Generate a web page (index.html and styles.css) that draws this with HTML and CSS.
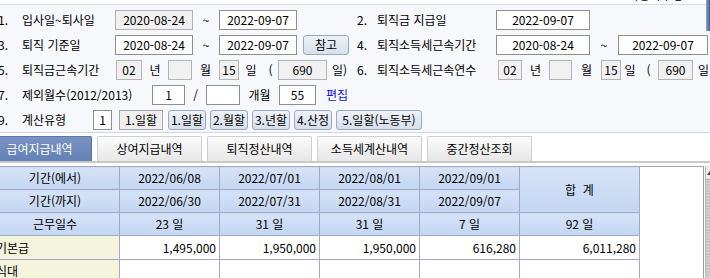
FILE: index.html
```html
<!DOCTYPE html>
<html lang="ko">
<head>
<meta charset="utf-8">
<title>퇴직정산</title>
<link rel="stylesheet" href="styles.css">
</head>
<body>
<div class="topline"><span class="cut">사용자수정</span></div>
<div class="edgebar"></div>
<div class="panel">
  <div class="row">
    <div class="half">
      <span class="num">1.</span><span class="lbl">입사일~퇴사일</span>
      <span class="box g w78">2020-08-24</span><span class="sep w26">~</span><span class="box w78">2022-09-07</span>
    </div>
    <div class="half r">
      <span class="num">2.</span><span class="lbl">퇴직금 지급일</span>
      <span class="box w94">2022-09-07</span>
    </div>
  </div>
  <div class="row">
    <div class="half">
      <span class="num">3.</span><span class="lbl">퇴직 기준일</span>
      <span class="box w78">2020-08-24</span><span class="sep w26">~</span><span class="box w78">2022-09-07</span>
      <span class="rbtn ref">참고</span>
    </div>
    <div class="half r">
      <span class="num">4.</span><span class="lbl">퇴직소득세근속기간</span>
      <span class="box w94">2020-08-24</span><span class="sep w28">~</span><span class="box w90">2022-09-07</span>
    </div>
  </div>
  <div class="row">
    <div class="half">
      <span class="num">5.</span><span class="lbl">퇴직금근속기간</span>
      <span class="box g w26 ml1">02</span><span class="sep w26">년</span>
      <span class="box g w24"></span><span class="sep w27">월</span>
      <span class="box g w20">15</span><span class="sep w24">일</span><span class="sep w15">(</span>
      <span class="box g w49">690</span><span class="tail">일)</span>
    </div>
    <div class="half r">
      <span class="num">6.</span><span class="lbl">퇴직소득세근속연수</span>
      <span class="box g w24 ml2">02</span><span class="sep w27">년</span>
      <span class="box g w23"></span><span class="sep w29">월</span>
      <span class="box g w20">15</span><span class="sep w18">일</span><span class="sep w19">(</span>
      <span class="box g w35">690</span><span class="tail">일</span>
    </div>
  </div>
  <div class="row">
    <span class="num">7.</span><span class="lbl w130">제외월수(2012/2013)</span>
    <span class="box w33">1</span><span class="sep w21">/</span><span class="box w34"></span>
    <span class="sep w39">개월</span><span class="box w37">55</span>
    <span class="link">편집</span>
  </div>
  <div class="row">
    <span class="num">9.</span><span class="lbl w71">계산유형</span>
    <span class="box w19">1</span>
    <span class="fbtn">1.일할</span>
    <span class="rbtn opt">1.일할</span>
    <span class="rbtn opt">2.월할</span>
    <span class="rbtn opt">3.년할</span>
    <span class="rbtn opt">4.산정</span>
    <span class="rbtn opt wide">5.일할(노동부)</span>
  </div>
</div>

<div class="tabs">
  <div class="tab on">급여지급내역</div>
  <div class="tab">상여지급내역</div>
  <div class="tab">퇴직정산내역</div>
  <div class="tab">소득세계산내역</div>
  <div class="tab">중간정산조회</div>
</div>

<div class="grid">
  <div class="gridbox">
    <table class="sheet">
      <colgroup>
        <col class="c0"><col class="cd"><col class="cd"><col class="cd"><col class="cd"><col class="ct">
      </colgroup>
      <tr class="hd">
        <td>기간(에서)</td><td>2022/06/08</td><td>2022/07/01</td><td>2022/08/01</td><td>2022/09/01</td>
        <td rowspan="2">합&nbsp;&nbsp;계</td>
      </tr>
      <tr class="hd">
        <td>기간(까지)</td><td>2022/06/30</td><td>2022/07/31</td><td>2022/08/31</td><td>2022/09/07</td>
      </tr>
      <tr class="hd">
        <td>근무일수</td><td>23 일</td><td>31 일</td><td>31 일</td><td>7 일</td><td>92 일</td>
      </tr>
      <tr class="dt">
        <td class="nm">기본급</td><td>1,495,000</td><td>1,950,000</td><td>1,950,000</td><td>616,280</td><td>6,011,280</td>
      </tr>
      <tr class="dt">
        <td class="nm">식대</td><td></td><td></td><td></td><td></td><td></td>
      </tr>
      <tr class="dt">
        <td class="nm">연장수당</td><td></td><td></td><td></td><td></td><td></td>
      </tr>
    </table>
    <div class="filler"></div>
  </div>
  <div class="vscroll"><div class="sbtn"><span class="arrow"></span></div></div>
</div>
</body>
</html>
```
FILE: styles.css
```css
* { box-sizing: border-box; }
html, body { margin: 0; padding: 0; }
body {
  width: 710px;
  height: 278px;
  overflow: hidden;
  background: #fff;
  color: #000;
  font-family: "Noto Sans CJK KR", "Liberation Sans", sans-serif;
  font-size: 12px;
  position: relative;
}

.topline { height: 4px; overflow: hidden; display: flex; }
.topline .cut { margin-left: 628px; margin-top: -13px; line-height: 16px; white-space: nowrap; }
.edgebar {
  position: absolute; right: 0; top: 0; width: 4px; height: 31px;
  background: linear-gradient(90deg, #8aa5cf, #3d5d92);
}

.panel {
  background: #f6f8fc;
  border-top: 1px solid #d3dcec;
  border-bottom: 1px solid #cbd6e8;
  padding-top: 2px;
}
.row { display: flex; align-items: center; height: 25px; white-space: nowrap; line-height: 18px; }
.half { display: flex; align-items: center; flex: 0 0 357px; }
.half.r { flex: 1 1 auto; }
.num { flex: 0 0 24px; margin-left: -2px; }
.half.r .num { flex-basis: 20px; margin-left: 0; }
.lbl { flex: 0 0 93px; }
.half.r .lbl { flex-basis: 119px; }
.lbl.w130 { flex-basis: 130px; }
.lbl.w71 { flex-basis: 71px; }

.box {
  flex: none;
  height: 20px;
  line-height: 18px;
  border: 1px solid #8f8f8f;
  background: #fff;
  text-align: center;
}
.box.g { background: #f1f1f1; border-color: #b3b3b3; }
.sep { flex: none; text-align: center; }
.tail { margin-left: 5px; }
.ml1 { margin-left: 1px; }
.ml2 { margin-left: 2px; }

.w15 { width: 15px; } .w18 { width: 18px; } .w19 { width: 19px; } .w20 { width: 20px; }
.w21 { width: 21px; } .w23 { width: 23px; } .w24 { width: 24px; } .w26 { width: 26px; }
.w27 { width: 27px; } .w28 { width: 28px; } .w29 { width: 29px; } .w33 { width: 33px; }
.w34 { width: 34px; } .w35 { width: 35px; } .w37 { width: 37px; } .w39 { width: 39px; }
.w49 { width: 49px; } .w78 { width: 78px; } .w90 { width: 90px; } .w94 { width: 94px; }

.link { margin-left: 10px; color: #1010e0; }

.rbtn {
  flex: none;
  height: 20px;
  line-height: 18px;
  text-align: center;
  border: 1px solid #9aa9c0;
  border-radius: 3px;
  background: linear-gradient(#eef2f8, #d6dfeb);
}
.rbtn.ref { width: 46px; margin-left: 6px; }
.rbtn.opt { width: 38px; margin-left: 4px; }
.fbtn + .rbtn.opt { margin-left: 5px; }
.rbtn.wide { width: 86px; }
.fbtn {
  flex: none;
  width: 44px;
  height: 20px;
  line-height: 18px;
  margin-left: 7px;
  text-align: center;
  border: 1px solid #a5a5a5;
  background: #efefef;
}

.tabs {
  display: flex;
  gap: 5px;
  margin: 3px 0 0 -13px;
  border-bottom: 2px solid #c9c9c9;
  height: 27px;
}
.tab {
  flex: none;
  width: 105px;
  height: 25px;
  line-height: 23px;
  text-align: center;
  border: 1px solid #cfcfcf;
  border-bottom: none;
  border-radius: 2px 2px 0 0;
  background: linear-gradient(#fbfbfb, #e7e7e7);
}
.tab.on {
  background: linear-gradient(#7893c2, #6281b5);
  border-color: #5a77aa;
  color: #fff;
}

.grid { display: flex; margin-top: 3px; }
.gridbox { display: flex; margin-left: -10px; width: 714px; flex: none; }
.sheet {
  border-collapse: collapse;
  table-layout: fixed;
  width: 649px;
  flex: none;
}
.sheet col.c0 { width: 129px; }
.sheet col.cd { width: 100px; }
.sheet col.ct { width: 120px; }
.sheet td {
  height: 22px;
  padding: 0;
  border: 1px solid #a1aac4;
  line-height: 20px;
  white-space: nowrap;
  overflow: hidden;
}
.sheet tr.hd td {
  background: linear-gradient(#d6e3f7, #c3d6f1);
  text-align: center;
}
.sheet tr.dt td { background: #fff; text-align: right; padding-right: 3px; }
.sheet tr.dt td.nm { background: #f4f4dd; text-align: left; padding-left: 5px; padding-right: 0; }
.filler {
  flex: 1 1 auto;
  height: 140px;
  background: #fff;
  border-top: 1px solid #a1aac4;
  border-right: 1px solid #9a9a9a;
}
.vscroll {
  flex: none;
  width: 14px;
  margin-left: 1px;
  height: 140px;
  background: repeating-linear-gradient(#c6c6c6 0 2px, #d6d6d6 2px 3px);
  border-left: 1px solid #b8b8b8;
}
.sbtn {
  height: 14px;
  background: #ececec;
  border-bottom: 1px solid #b0b0b0;
  display: flex;
  align-items: center;
  padding-left: 1px;
}
.arrow {
  width: 0; height: 0;
  border-left: 3px solid transparent;
  border-right: 3px solid transparent;
  border-bottom: 4px solid #444;
}
```
